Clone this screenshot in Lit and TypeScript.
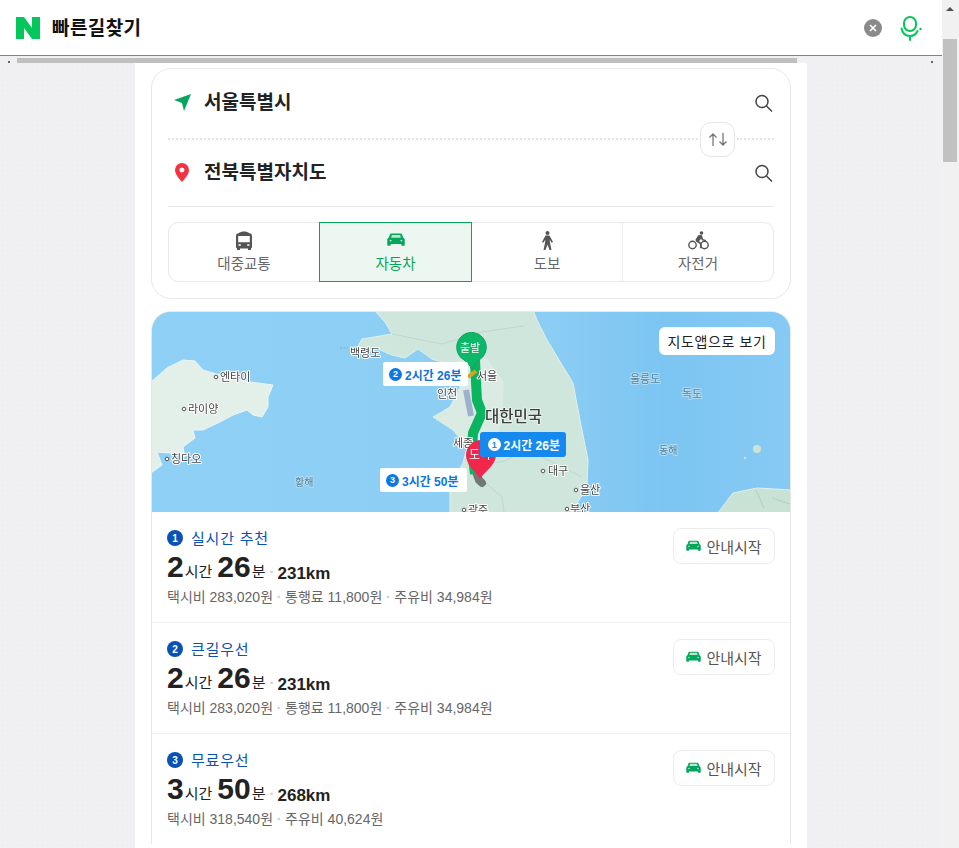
import { LitElement, html, css, svg } from 'lit';
import { customElement } from 'lit/decorators.js';

const GREEN = '#03c75a';

const routes = [
  { n: 1, title: '실시간 추천', h: '2', m: '26', km: '231km', fees: ['택시비 283,020원', '통행료 11,800원', '주유비 34,984원'] },
  { n: 2, title: '큰길우선', h: '2', m: '26', km: '231km', fees: ['택시비 283,020원', '통행료 11,800원', '주유비 34,984원'] },
  { n: 3, title: '무료우선', h: '3', m: '50', km: '268km', fees: ['택시비 318,540원', '주유비 40,624원'] },
];

// map coordinates: screen minus the map's corner (152,312)
const cities = [
  { t: '엔타이', x: 68, y: 65, dot: 64 },
  { t: '라이양', x: 36, y: 97, dot: 32 },
  { t: '칭다오', x: 19, y: 147, dot: 15 },
  { t: '백령도', x: 198, y: 41 },
  { t: '서울', x: 325, y: 64 },
  { t: '인천', x: 285, y: 82 },
  { t: '세종', x: 301, y: 131 },
  { t: '대구', x: 396, y: 159, dot: 391 },
  { t: '울산', x: 428, y: 178, dot: 424 },
  { t: '부산', x: 418, y: 197, dot: 415 },
  { t: '광주', x: 316, y: 198, dot: 312 },
];

const seas = [
  { t: '황해', x: 143, y: 170 },
  { t: '울릉도', x: 478, y: 67 },
  { t: '독도', x: 530, y: 82 },
  { t: '동해', x: 507, y: 138 },
];

const carIcon = (color: string) => html`
  <svg width="18" height="14" viewBox="0 0 18 14">
    <path fill="${color}" d="M4.6 0.6h8.8c.9 0 1.5.4 1.8 1.2l1 3c.9.4 1.5 1.1 1.5 2.1v5c0 .5-.3.8-.8.8h-1.8c-.5 0-.8-.3-.8-.8v-.8H3.7v.8c0 .5-.3.8-.8.8H1.100c-.5 0-.8-.3-.8-.8v-5c0-1 .6-1.700 1.500-2.100l1-3c.3-.8.9-1.200 1.800-1.200z"/>
    <path fill="#fff" opacity=".72" d="M4.900 2h8.200l.9 2.700H4z"/>
    <circle cx="3.600" cy="7.600" r=".9" fill="#fff" opacity=".8"/>
    <circle cx="14.400" cy="7.600" r=".9" fill="#fff" opacity=".8"/>
  </svg>`;

const searchIcon = html`
  <svg class="find" width="18" height="18" viewBox="0 0 18 18" fill="none" stroke="#444" stroke-width="1.500">
    <circle cx="7" cy="7.500" r="6"/>
    <path d="M11.500 12l5.500 5.500"/>
  </svg>`;

@customElement('app-root')
export class AppRoot extends LitElement {
  static styles = css`
    :host {
      display: flex;
      width: 959px;
      height: 848px;
      overflow: hidden;
      font-family: 'Liberation Sans', 'Noto Sans CJK KR', sans-serif;
      color: #222;
      background: #f0f0f2;
    }
    .page { width: 942px; flex: none; display: flex; flex-direction: column; }
    .vbar { flex: 1; display: flex; flex-direction: column; align-items: center; background: #f1f1f1; padding: 7px 1px 0 0; }
    .vbar .up { width: 0; height: 0; border: 4px solid transparent; border-top: 0; border-bottom: 4px solid #505050; }
    .vbar .thumb { width: 14px; height: 123px; margin-top: 28px; background: #c1c1c1; }

    header { height: 55px; flex: none; display: flex; align-items: center; background: #fff; border-bottom: 1px solid #34b55c; box-sizing: content-box; }
    .logo { margin-left: 16px; }
    header h1 { margin: 0 0 3px 12px; font-size: 19px; letter-spacing: .4px; font-weight: 700; color: #111; flex: 1; }
    .clear { display: block; margin-right: 18px; }
    .mic { display: block; margin-right: 18px; }

    .hbar { height: 7px; flex: none; display: flex; align-items: flex-end; box-sizing: border-box; }
    .hbar div { width: 780px; height: 5px; background: #bfbfbf; margin: 0 134px 0 7px; }
    .hbar i { width: 2px; height: 2px; margin: 0 0 0 8px; background: #666; }
    .hbar i:last-child { margin: 0; }

    .body { flex: 1; min-height: 0; background-color: #f0f0f2; background-image: radial-gradient(#ebebed .5px, transparent .7px); background-size: 5px 5px; }
    .col { width: 672px; height: 100%; margin-left: 135px; background: #fff; padding: 5px 16px 0; box-sizing: border-box; }

    .search { border: 1px solid #e8e8e8; border-radius: 20px; height: 231px; padding: 0 16px; box-sizing: border-box; }
    .place { display: flex; align-items: center; height: 34px; padding-right: 1px; }
    .place .mark { width: 36px; display: flex; justify-content: center; flex: none; padding-right: 8px; box-sizing: border-box; }
    .place b { flex: 1; font-size: 19px; font-weight: 700; color: #222; padding-bottom: 3px; }
    .place svg { display: block; }
    .place .find { margin-top: 2px; }
    .from { margin-top: 16px; height: 38px; padding-bottom: 4px; box-sizing: border-box; }
    .swap-line { height: 32px; display: flex; align-items: center; gap: 2px; }
    .swap-line i { flex: 1; border-top: 2px dotted #e4e4e4; }
    .swap-line i:last-child { flex: none; width: 37px; }
    .swap { flex: none; width: 35px; height: 35px; border: 1px solid #e6e6e6; border-radius: 11px; box-sizing: border-box; display: flex; align-items: center; justify-content: center; background: #fff; }
    .rule { height: 1px; background: #e8e8e8; margin-top: 17px; }

    .tabs { display: flex; height: 60px; margin-top: 15px; border: 1px solid #e9e9e9; border-radius: 10px; box-sizing: border-box; }
    .tab { flex: 1; display: flex; flex-direction: column; align-items: center; font-size: 14.5px; color: #666; box-sizing: border-box; }
    .tab + .tab { border-left: 1px solid #efefef; }
    .tab .ico { height: 20px; margin-top: 7px; display: flex; align-items: center; }
    .tab span { line-height: 20px; margin-top: 4px; }
    .tab.on { margin: -1px 0; height: 60px; flex: none; width: 153px; background: #ebf7f0; border: 1px solid #03a65a; color: #03a65a; }
    .tab.on + .tab { border-left: 0; }

    .result { margin-top: 12px; border: 1px solid #e8e8e8; border-bottom: 0; border-radius: 20px 20px 0 0; overflow: hidden; }
    .map { position: relative; height: 200px; overflow: hidden; background: #8ccff5; }
    .map svg { display: block; filter: blur(.35px); }
    .map text { font-family: 'Liberation Sans', 'Noto Sans CJK KR', sans-serif; paint-order: stroke; stroke-linejoin: round; }
    .tag { position: absolute; display: flex; align-items: center; gap: 3px; height: 24px; box-sizing: border-box; padding: 0 6px; background: #fff; color: #0d74df; font-size: 12px; font-weight: 700; border-radius: 2px; white-space: nowrap; }
    .tag em { width: 13px; height: 13px; border-radius: 50%; background: #0a78e8; color: #fff; font-style: normal; font-size: 9px; display: flex; align-items: center; justify-content: center; }
    .tag.main { background: #1589ee; color: #fff; border-radius: 3px; padding-left: 8px; }
    .tag.main em { background: #fff; color: #1589ee; }
    .tag2 { left: 231px; top: 50px; width: 85px; }
    .tag1 { left: 328px; top: 120px; width: 86px; height: 25px; }
    .tag3 { left: 228px; top: 156px; width: 87px; }
    .app-link { position: absolute; right: 15px; top: 15px; height: 28px; width: 116px; border-radius: 6px; background: #fff; color: #222; font-size: 14px; letter-spacing: .6px; display: flex; align-items: center; justify-content: center; padding-bottom: 1px; box-sizing: border-box; }

    .row { display: flex; justify-content: space-between; height: 111px; padding: 16px 15px 0; box-sizing: border-box; border-top: 1px solid #efefef; }
    .map + .row { border-top: 0; height: 110px; }
    .name { display: flex; align-items: center; gap: 8px; height: 20px; font-size: 15px; color: #0a52b5; letter-spacing: .8px; }
    .name span { padding-bottom: 2px; }
    .name em { width: 16px; height: 16px; border-radius: 50%; background: #0a52b5; color: #fff; font: 700 10px 'Liberation Sans', sans-serif; letter-spacing: 0; display: flex; align-items: center; justify-content: center; }
    .time { margin-top: 1px; height: 36px; line-height: 36px; font-size: 15px; white-space: nowrap; color: #222; }
    .time b { font-size: 30px; font-weight: 700; vertical-align: -1px; }
    .time b + span { margin: 0 5px 0 1px; vertical-align: -1px; }
    .time .sep { color: #ccc; margin: 0 3px 0 -1px; font-weight: 700; vertical-align: -1px; }
    .time .km { font-size: 17px; font-weight: 700; vertical-align: -3px; }
    .fees { margin-top: 2px; line-height: 20px; font-size: 14px; color: #666; white-space: nowrap; }
    .fees i { font-style: normal; color: #ccc; margin: 0 3.7px; font-weight: 700; }
    .go { flex: none; width: 102px; height: 36px; border: 1px solid #ececec; border-radius: 8px; box-sizing: border-box; display: flex; align-items: center; justify-content: center; gap: 5px; font-size: 15px; color: #555; }
    .go svg { width: 15px; height: 12px; }
  `;

  private mapArt() {
    return html`<svg width="638" height="200" viewBox="0 0 638 200">
      <defs>
        <linearGradient id="sea" x1="0" x2="1" y1="0" y2="0">
          <stop offset="0" stop-color="#8ed0f6"/><stop offset=".62" stop-color="#8ccdf4"/><stop offset=".8" stop-color="#7cc5f2"/><stop offset="1" stop-color="#86caf4"/>
        </linearGradient>
      </defs>
      <rect width="638" height="200" fill="url(#sea)"/>
      <path fill="#e3efe9" stroke="#eef6f3" d="M-1 70L15 56 31 48 43 49 51 58 61 61 81 66 98 70 121 73 116 85 116 95 110 105 101 103 95 98 81 103 68 110 51 118 41 118 43 126 31 135 33 145 18 141 5 140 10 153-1 161z"/>
      <path fill="#cfe6dc" stroke="#e2f0ea" d="M222 -2L233 10 240 22 228 24 210 27 205 36 215 40 226 37 240 43 253 46 266 37 280 47 296 52 308 75 298 95 281 105 301 118 315 135 311 151 298 175 298 202 420 202 421 198 435 175 436 148 428 108 421 71 395 28 385 8 381 -2z"/>
      <path fill="#d9ebe2" d="M296 52L330 40 352 70 350 110 336 150 315 135 301 118 281 105 298 95 308 75z"/>
      <path fill="none" stroke="#b9d4c9" stroke-width=".8" d="M240 22L290 32 330 20 372 14M315 152L350 150 375 138 400 150 430 165M330 168L350 185 352 200"/>
      <path fill="#c9e2d6" stroke="#e0efe9" d="M565 202L581 181 605 176 640 178 640 202z"/>
      <path fill="none" stroke="#a9c6ba" stroke-width=".7" d="M604 178L612 196M620 186L638 192"/>
      <circle cx="605" cy="137" r="4" fill="#cfe3d4"/>
      <circle cx="593" cy="146" r="1.200" fill="#cfe3d4"/>
      <path stroke="#8aa6b8" stroke-dasharray="2 1.500" d="M188 36h8"/>
      <path fill="none" stroke="#9fb0cf" stroke-width="6" d="M314 78l5 26"/>
      <path fill="none" stroke="#6f7a78" stroke-width="8" stroke-linecap="round" d="M324 160l3 8 3 3"/>
      <path fill="none" stroke="#0bb45e" stroke-width="10" stroke-linejoin="round" d="M323 48l1 22 1 18 5 13-9 20-1 17 3 24"/>
      <path fill="none" stroke="#d8a11f" stroke-width="4" d="M316 65l8-6"/>
      ${cities.map(c => svg`
        ${c.dot !== undefined ? svg`<circle cx="${c.dot}" cy="${c.y}" r="1.800" fill="#fff" stroke="#555"/>` : ''}
        <text x="${c.x}" y="${c.y + 4}" font-size="11" fill="#444" stroke="#fff" stroke-width="2">${c.t}</text>`)}
      ${seas.map(c => svg`<text x="${c.x}" y="${c.y + 4}" font-size="${c.t.length === 3 || c.t === '독도' ? 11 : 10}" fill="#557f99" stroke="#b5def5" stroke-width="2">${c.t}</text>`)}
      <text x="333" y="110" font-size="15.500" font-weight="500" fill="#3d3d3d" stroke="#e6f2ec" stroke-width="2">대한민국</text>
      <path fill="#0bb868" stroke="#09a65c" d="M320 58c-2-5-5-8-8-10a14.800 14.800 0 1 1 15 0c-3 2-5 5-7 10z"/>
      <text x="318" y="40" font-size="11" fill="#fff" text-anchor="middle">출발</text>
      <path fill="#f0264a" d="M328 167C324 160 314 153 314 143a15 15 0 0 1 30 0C344 153 332 160 328 167z"/>
      <text x="328" y="147" font-size="12" fill="#fff" text-anchor="middle">도착</text>
    </svg>`;
  }

  render() {
    return html`
      <div class="page">
        <header>
          <svg class="logo" width="24" height="22" viewBox="0 0 24 22"><path fill="${GREEN}" d="M0 0h8l8 11V0h8v22h-8L8 11v11H0z"/></svg>
          <h1>빠른길찾기</h1>
          <svg class="clear" width="18" height="18" viewBox="0 0 18 18">
            <circle cx="9" cy="9" r="9" fill="#8a8a8a"/>
            <path stroke="#fff" stroke-width="1.600" d="M6 6l6 6M12 6l-6 6"/>
          </svg>
          <svg class="mic" width="24" height="26" viewBox="0 0 24 26" fill="none" stroke="${GREEN}" stroke-width="2" stroke-linecap="round">
            <rect x="4" y="2" width="12" height="14" rx="6"/>
            <path d="M1.500 13.500C2.500 18.500 6 21 10 21c3 0 6-1.500 7.500-5M10 21v4"/>
            <circle cx="20.500" cy="14" r="1.200" fill="${GREEN}" stroke="none"/>
          </svg>
        </header>
        <div class="hbar"><i></i><div></div><i></i></div>
        <div class="body">
          <div class="col">
            <section class="search">
              <div class="place from">
                <span class="mark"><svg width="18" height="18" viewBox="0 0 18 18"><path fill="#03a65a" d="M18 1L11 18 9 10 1 7z"/></svg></span>
                <b>서울특별시</b>${searchIcon}
              </div>
              <div class="swap-line">
                <i></i>
                <span class="swap"><svg width="18" height="13" viewBox="0 0 18 13" fill="none" stroke="#777" stroke-width="1.300"><path d="M4 13V1M.5 4.500L4 1l3.500 3.500M14 0v12M10.500 8.500L14 12l3.500-3.500"/></svg></span>
                <i></i>
              </div>
              <div class="place">
                <span class="mark"><svg width="14" height="19" viewBox="0 0 14 19"><path fill="#f5323f" fill-rule="evenodd" d="M7 0a7 7 0 0 1 7 7c0 4-3.500 8-7 12C3.500 15 0 11 0 7a7 7 0 0 1 7-7zm0 4.500a2.500 2.500 0 1 0 0 5 2.500 2.500 0 0 0 0-5z"/></svg></span>
                <b>전북특별자치도</b>${searchIcon}
              </div>
              <div class="rule"></div>
              <div class="tabs">
                <div class="tab">
                  <div class="ico"><svg width="16" height="19" viewBox="0 0 16 19"><path fill="#555" d="M2.500 2.200C4 1 6 .5 8 .5s4 .5 5.500 1.700c1.500.2 2.500 1.100 2.500 2.600V16c0 .7-.4 1.200-1 1.300V19h-3v-1.600H4V19H1v-1.700c-.6-.1-1-.6-1-1.300V4.800c0-1.500 1-2.400 2.500-2.600z"/><path fill="#fff" d="M2.200 5h11.600v6.300H2.200zM2.500 13.300h2.300v1.500H2.500zM11.200 13.300h2.300v1.500h-2.300z"/></svg></div>
                  <span>대중교통</span>
                </div>
                <div class="tab on">
                  <div class="ico">${carIcon('#03a65a')}</div>
                  <span>자동차</span>
                </div>
                <div class="tab">
                  <div class="ico"><svg width="11" height="19" viewBox="0 0 11 19"><circle cx="5.500" cy="2" r="2" fill="#555"/><path fill="#555" d="M3.500 4.500h4L11 11l-1.300.7-2-3 .3 3.300L9.500 19H7.500L5.500 13.500 3.500 19h-2L3 12l.3-3.300-2 3L0 11z"/></svg></div>
                  <span>도보</span>
                </div>
                <div class="tab">
                  <div class="ico"><svg width="21" height="19" viewBox="0 0 21 19"><circle cx="4.500" cy="14" r="3.700" fill="none" stroke="#555" stroke-width="1.400"/><circle cx="16.500" cy="14" r="3.700" fill="none" stroke="#555" stroke-width="1.400"/><circle cx="13.500" cy="2" r="1.800" fill="#555"/><path fill="#555" d="M10.500 4l3.500.300 1 3.700 3 1v1.500l-4-1.200-1-1.500-2 2.400 2.500 2v5h-1.600v-4.200L8 10.500l-.5-2z"/></svg></div>
                  <span>자전거</span>
                </div>
              </div>
            </section>
            <section class="result">
              <div class="map">
                ${this.mapArt()}
                <div class="tag tag2"><em>2</em>2시간 26분</div>
                <div class="tag tag3"><em>3</em>3시간 50분</div>
                <div class="tag main tag1"><em>1</em>2시간 26분</div>
                <div class="app-link">지도앱으로 보기</div>
              </div>
              ${routes.map(r => html`
                <div class="row">
                  <div>
                    <div class="name"><em>${r.n}</em><span>${r.title}</span></div>
                    <div class="time"><b>${r.h}</b><span>시간</span><b>${r.m}</b><span>분</span><span class="sep">·</span><span class="km">${r.km}</span></div>
                    <div class="fees">${r.fees.map((f, i) => html`${i ? html`<i>·</i>` : ''}${f}`)}</div>
                  </div>
                  <div class="go">${carIcon('#03a65a')}안내시작</div>
                </div>`)}
            </section>
          </div>
        </div>
      </div>
      <div class="vbar"><div class="up"></div><div class="thumb"></div></div>
    `;
  }
}
